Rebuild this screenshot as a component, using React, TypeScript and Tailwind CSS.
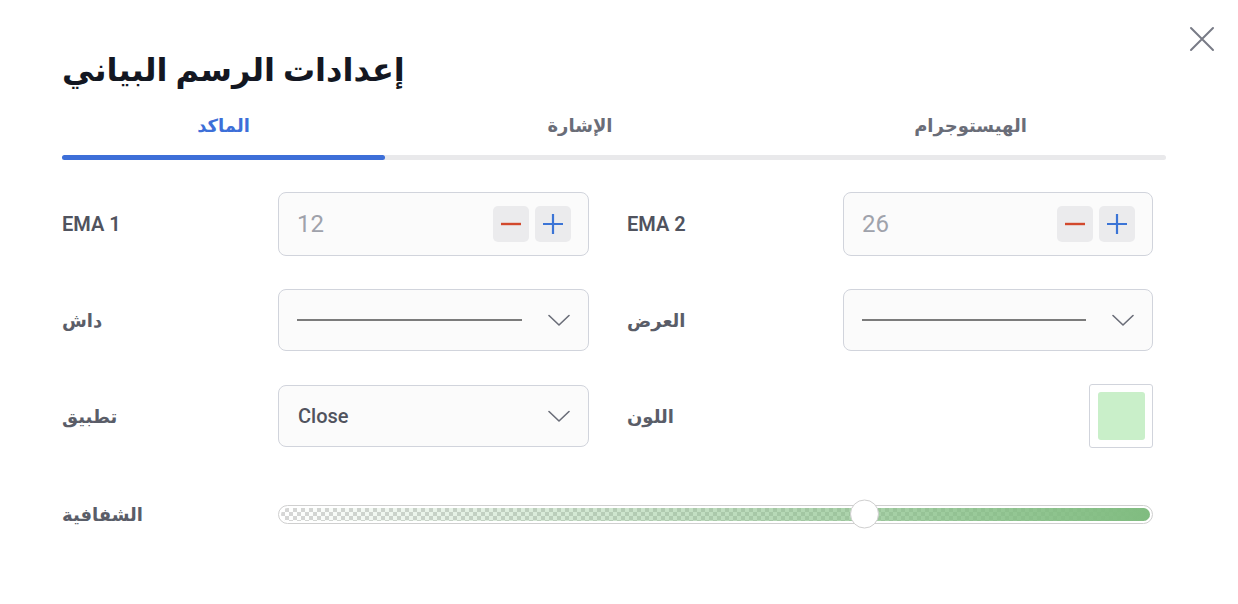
import React from "react";

const Chevron = () => (
  <svg width="22" height="13" viewBox="0 0 22 13" fill="none">
    <path d="M1 1.5 L11 11 L21 1.5" stroke="#6a6d78" strokeWidth="1.6" strokeLinecap="round" strokeLinejoin="round" />
  </svg>
);

const NumberInput = ({ value }: { value: string }) => (
  <div className="flex h-[64px] items-center rounded-[8px] border border-[#d1d4dc] bg-[#fbfbfb] pl-[18px] pr-[17px]">
    <span className="flex-1 text-[24px] text-[#9fa2ab]">{value}</span>
    <div className="flex gap-[6px]">
      <button className="flex h-[36px] w-[36px] items-center justify-center rounded-[5px] bg-[#ebebed]">
        <svg width="22" height="22" viewBox="0 0 22 22">
          <path d="M1 11 H21" stroke="#d2492d" strokeWidth="2.4" />
        </svg>
      </button>
      <button className="flex h-[36px] w-[36px] items-center justify-center rounded-[5px] bg-[#ebebed]">
        <svg width="22" height="22" viewBox="0 0 22 22">
          <path d="M1 11 H21 M11 1 V21" stroke="#3b74d6" strokeWidth="2.2" />
        </svg>
      </button>
    </div>
  </div>
);

const LineSelect = () => (
  <div className="flex h-[62px] items-center rounded-[8px] border border-[#d1d4dc] bg-[#fbfbfb] pl-[18px] pr-[18px]">
    <div className="mr-[26px] h-[2px] flex-1 bg-[#7b7b7b]" />
    <Chevron />
  </div>
);

const Label = ({ children }: { children: React.ReactNode }) => (
  <div className="flex items-center text-[18px] font-semibold text-[#5a5d68]">{children}</div>
);

const LatinLabel = ({ children }: { children: React.ReactNode }) => (
  <div className="flex items-center text-[20px] font-semibold text-[#50535e]">{children}</div>
);

export default function App() {
  return (
    <div
      className="relative h-[604px] w-[1238px] overflow-hidden bg-white"
      style={{ fontFamily: 'Roboto, "DejaVu Sans", sans-serif' }}
    >
      <button className="absolute left-[1189px] top-[26px] flex h-[26px] w-[26px] items-center justify-center">
        <svg width="26" height="26" viewBox="0 0 26 26">
          <path d="M2 2 L24 24 M24 2 L2 24" stroke="#787b86" strokeWidth="2" strokeLinecap="round" />
        </svg>
      </button>

      <div className="flex w-[1104px] flex-col pl-[62px] pt-[50px] box-content">
        <h1 className="h-[40px] text-[32px] font-bold leading-[40px] text-[#131722]">إعدادات الرسم البياني</h1>

        <div className="mt-[24px] flex flex-col">
          <div className="flex h-[24px] text-[18px] leading-[24px]">
            <div className="w-[323px] text-center font-semibold text-[#3d6fd8]">الماكد</div>
            <div className="w-[390px] text-center font-semibold text-[#6a6d78]">الإشارة</div>
            <div className="w-[391px] text-center font-semibold text-[#6a6d78]">الهيستوجرام</div>
          </div>
          <div className="mt-[17px] h-[5px] w-full rounded-full bg-[#e9e9eb]">
            <div className="h-[5px] w-[323px] rounded-full bg-[#3d6fd8]" />
          </div>
        </div>

        <div className="mt-[32px] grid grid-cols-[216px_311px_38px_216px_310px] grid-rows-[64px_64px_64px] gap-y-[32px]">
          <LatinLabel>EMA 1</LatinLabel>
          <NumberInput value="12" />
          <div />
          <LatinLabel>EMA 2</LatinLabel>
          <NumberInput value="26" />

          <Label>داش</Label>
          <div className="flex items-center">
            <div className="w-full"><LineSelect /></div>
          </div>
          <div />
          <Label>العرض</Label>
          <div className="flex items-center">
            <div className="w-full"><LineSelect /></div>
          </div>

          <Label>تطبيق</Label>
          <div className="flex items-center">
            <div className="flex h-[62px] w-full items-center rounded-[8px] border border-[#d1d4dc] bg-[#fbfbfb] pl-[19px] pr-[18px]">
              <span className="flex-1 text-[20px] font-medium text-[#50535e]">Close</span>
              <Chevron />
            </div>
          </div>
          <div />
          <Label>اللون</Label>
          <div className="flex items-center justify-end">
            <div className="flex h-[64px] w-[64px] items-center justify-center rounded-[3px] border border-[#d1d4dc] bg-white">
              <div className="h-[48px] w-[47px] rounded-[3px] bg-[#c9efc9]" />
            </div>
          </div>
        </div>

        <div className="mt-[34px] grid h-[64px] grid-cols-[216px_875px] items-center">
          <Label>الشفافية</Label>
          <div className="relative flex h-[19px] items-center rounded-full border-[1.5px] border-[#cfcfcf] bg-white p-[2px]">
            <div className="relative h-full w-full overflow-hidden rounded-full bg-[conic-gradient(#d6d6d6_25%,#ffffff_0_50%,#d6d6d6_0_75%,#ffffff_0)] bg-[length:8px_8px]">
              <div className="absolute inset-0 bg-gradient-to-r from-[rgba(128,188,128,0)] to-[#80bc80]" />
            </div>
            <div className="absolute left-[571px] top-1/2 h-[29px] w-[29px] -translate-y-1/2 rounded-full border-[1.5px] border-[#cfcfcf] bg-white" />
          </div>
        </div>
      </div>
    </div>
  );
}
